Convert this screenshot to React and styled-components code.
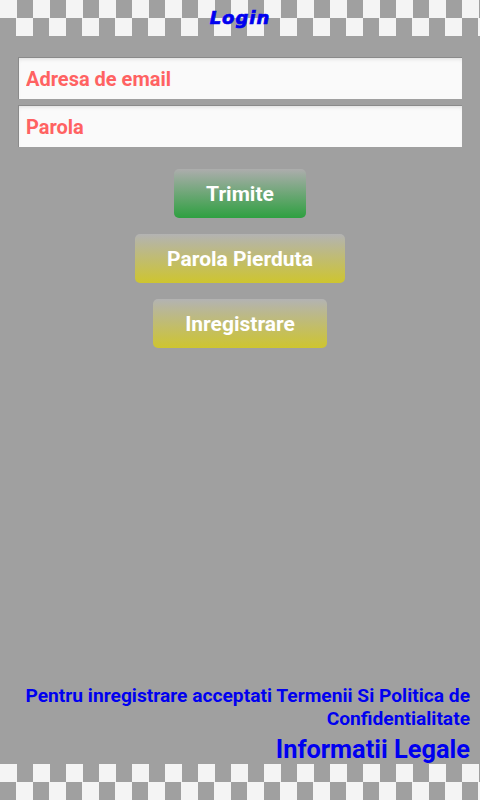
import React from "react";
import styled, { createGlobalStyle } from "styled-components";

const GlobalStyle = createGlobalStyle`
  html, body {
    margin: 0;
    padding: 0;
    background: #a0a0a0;
  }
  body {
    font-family: Roboto, "Liberation Sans", sans-serif;
  }
`;

const Page = styled.div`
  display: flex;
  flex-direction: column;
  width: 480px;
  height: 800px;
  background: #a0a0a0;
  overflow: hidden;
`;

const Checker = styled.div`
  flex: 0 0 36px;
  height: 36px;
  background-color: #a0a0a0;
  background-image:
    linear-gradient(90deg, #f4f4f4 0 17px, transparent 17px 33px),
    linear-gradient(90deg, transparent 0 16px, #f4f4f4 16px 33px);
  background-size: 33px 18px, 33px 18px;
  background-position: 0 0, 0 18px;
  background-repeat: repeat-x, repeat-x;
  display: flex;
  align-items: center;
  justify-content: center;
`;

const Title = styled.h1`
  margin: 0;
  font-family: "DejaVu Sans", sans-serif;
  font-style: italic;
  font-weight: 700;
  font-size: 18px;
  letter-spacing: 1px;
  color: #0000f0;
  -webkit-text-stroke: 0.7px #0000f0;
  transform: translateY(-1px);
`;

const Form = styled.div`
  display: flex;
  flex-direction: column;
  padding: 21px 18px 0;
  gap: 6px;
`;

const Field = styled.input`
  box-sizing: border-box;
  width: 100%;
  height: 42px;
  border: none;
  border-top: 1px solid #8a8a8a;
  border-left: 1px solid #8a8a8a;
  background: #fafafa;
  box-shadow: inset 0 3px 4px -2px rgba(0, 0, 0, 0.12);
  padding: 0 7px;
  font-family: Roboto, sans-serif;
  font-weight: 700;
  font-size: 20px;
  outline: none;
  &::placeholder {
    color: #ff6262;
  }
`;

const Actions = styled.div`
  display: flex;
  flex-direction: column;
  align-items: center;
  gap: 16px;
  padding-top: 22px;
`;

const Button = styled.button`
  height: 49px;
  padding: 0 32px;
  border: none;
  border-radius: 5px;
  font-family: Roboto, sans-serif;
  font-weight: 700;
  font-size: 21px;
  color: #ffffff;
  background: ${(p) =>
    p.$variant === "green"
      ? "linear-gradient(#adadad, #2ea040)"
      : "linear-gradient(#b3b3b3, #cec52f)"};
`;

const Spacer = styled.div`
  flex: 1;
`;

const Footer = styled.div`
  display: flex;
  flex-direction: column;
  align-items: flex-end;
  padding: 0 10px 0 10px;
  text-align: right;
  color: #0000f0;
  font-family: Roboto, sans-serif;
  font-weight: 700;
`;

const Terms = styled.p`
  margin: 0 0 4px;
  font-size: 19.2px;
  line-height: 23px;
`;

const Legal = styled.a`
  font-size: 25.4px;
  line-height: 30px;
  color: inherit;
  text-decoration: none;
`;

export default function App() {
  return (
    <>
      <GlobalStyle />
      <Page>
        <Checker>
          <Title>Login</Title>
        </Checker>
        <Form>
          <Field type="email" placeholder="Adresa de email" />
          <Field type="password" placeholder="Parola" />
        </Form>
        <Actions>
          <Button $variant="green">Trimite</Button>
          <Button>Parola Pierduta</Button>
          <Button>Inregistrare</Button>
        </Actions>
        <Spacer />
        <Footer>
          <Terms>
            Pentru inregistrare acceptati Termenii Si Politica de
            Confidentialitate
          </Terms>
          <Legal>Informatii Legale</Legal>
        </Footer>
        <Checker />
      </Page>
    </>
  );
}
